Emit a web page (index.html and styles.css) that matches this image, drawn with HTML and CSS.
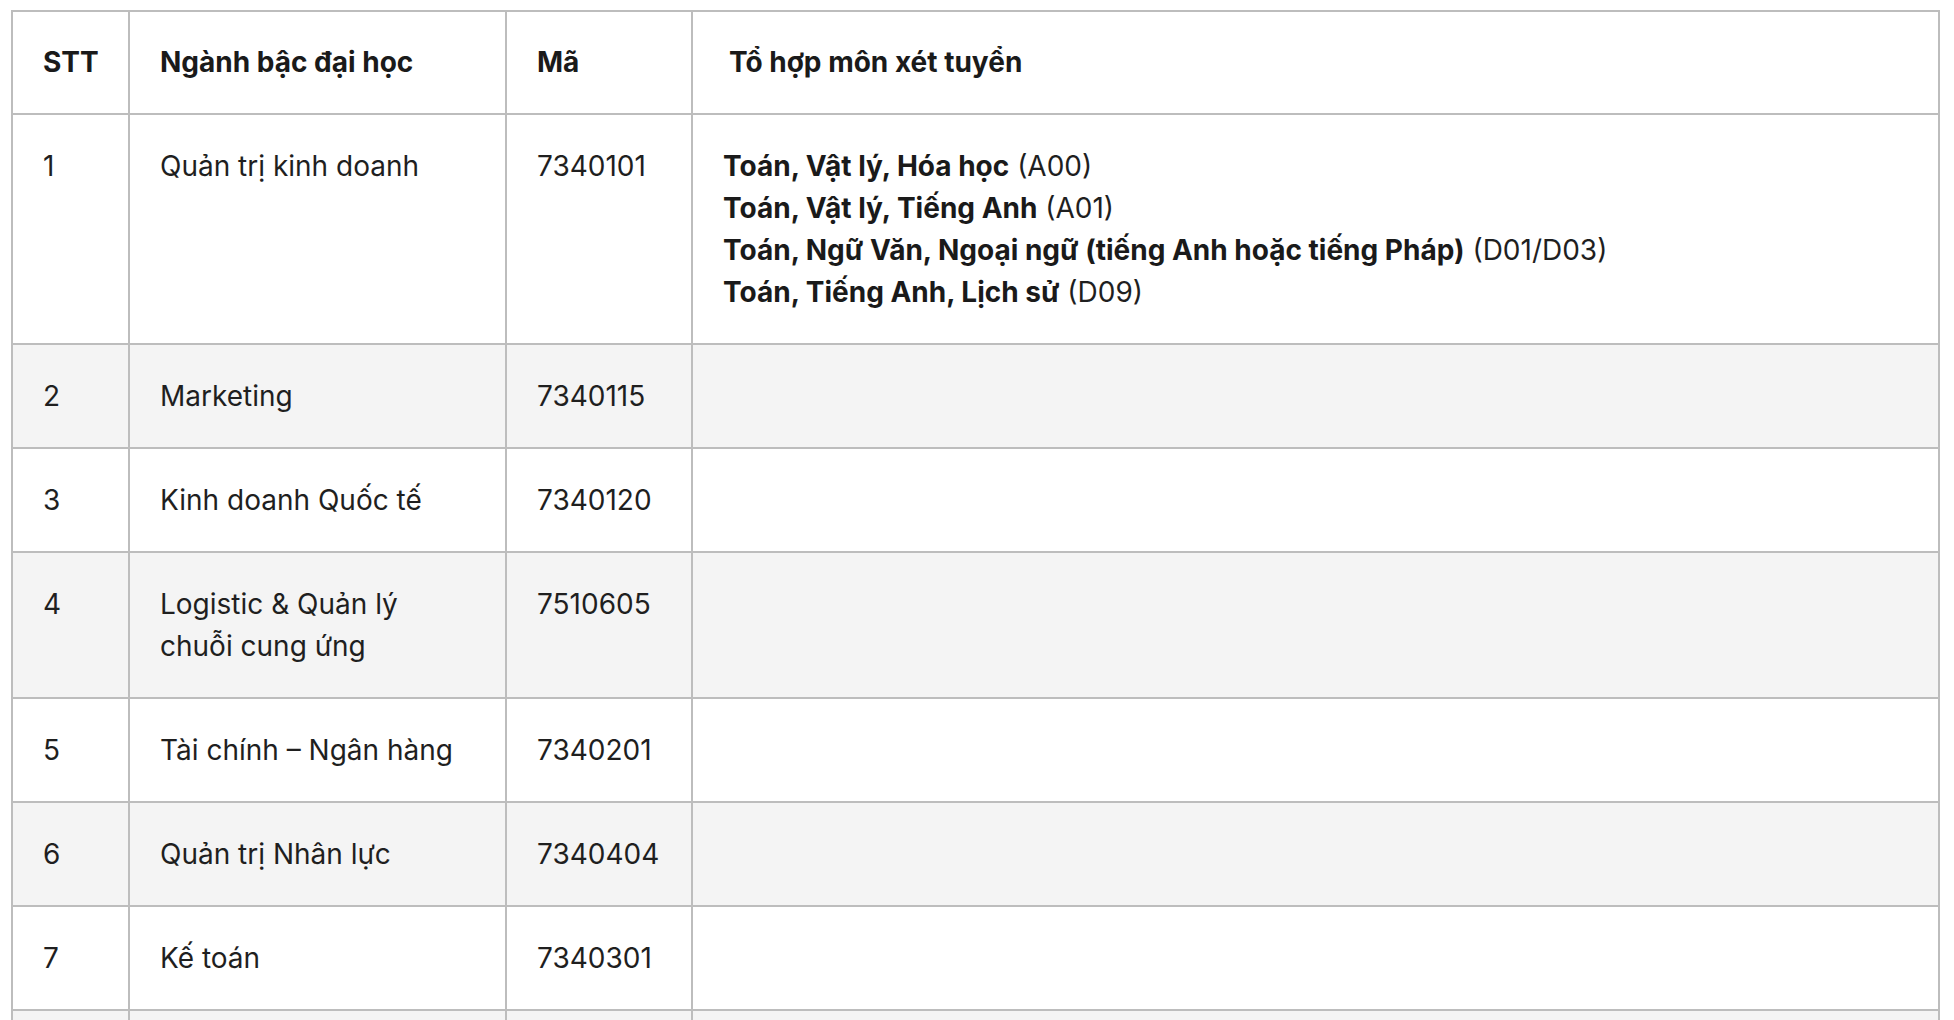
FILE: index.html
```html
<!DOCTYPE html>
<html lang="vi">
<head>
<meta charset="utf-8">
<title>Ngành đào tạo</title>
<link rel="stylesheet" href="styles.css">
</head>
<body>
<table class="majors">
  <colgroup>
    <col class="c-stt">
    <col class="c-name">
    <col class="c-code">
    <col class="c-combo">
  </colgroup>
  <thead>
    <tr>
      <th>STT</th>
      <th>Ngành bậc đại học</th>
      <th>Mã</th>
      <th class="combo-head">Tổ hợp môn xét tuyển</th>
    </tr>
  </thead>
  <tbody>
    <tr>
      <td>1</td>
      <td>Quản trị kinh doanh</td>
      <td>7340101</td>
      <td>
        <div><strong>Toán, Vật lý, Hóa học</strong> (A00)</div>
        <div><strong>Toán, Vật lý, Tiếng Anh</strong> (A01)</div>
        <div><strong>Toán, Ngữ Văn, Ngoại ngữ (tiếng Anh hoặc tiếng Pháp)</strong> (D01/D03)</div>
        <div><strong>Toán, Tiếng Anh, Lịch sử</strong> (D09)</div>
      </td>
    </tr>
    <tr>
      <td>2</td>
      <td>Marketing</td>
      <td>7340115</td>
      <td></td>
    </tr>
    <tr>
      <td>3</td>
      <td>Kinh doanh Quốc tế</td>
      <td>7340120</td>
      <td></td>
    </tr>
    <tr>
      <td>4</td>
      <td>Logistic &amp; Quản lý chuỗi cung ứng</td>
      <td>7510605</td>
      <td></td>
    </tr>
    <tr>
      <td>5</td>
      <td>Tài chính – Ngân hàng</td>
      <td>7340201</td>
      <td></td>
    </tr>
    <tr>
      <td>6</td>
      <td>Quản trị Nhân lực</td>
      <td>7340404</td>
      <td></td>
    </tr>
    <tr>
      <td>7</td>
      <td>Kế toán</td>
      <td>7340301</td>
      <td></td>
    </tr>
    <tr class="row-empty">
      <td></td>
      <td></td>
      <td></td>
      <td></td>
    </tr>
  </tbody>
</table>
</body>
</html>
```
FILE: styles.css
```css
html, body {
  margin: 0;
  padding: 0;
  background: #ffffff;
}

body {
  font-family: Inter, "Noto Sans", "Liberation Sans", sans-serif;
  font-size: 28px;
  line-height: 42px;
  color: #1f1f1f;
  padding: 10px 0 0 11px;
}

.majors {
  border-collapse: collapse;
  table-layout: fixed;
  width: 1927px;
}

.c-stt { width: 117px; }
.c-name { width: 377px; }
.c-code { width: 186px; }
.c-combo { width: 1247px; }

.majors th,
.majors td {
  border: 2px solid #bdbdbd;
  padding: 30px 30px 30px 30px;
  text-align: left;
  vertical-align: top;
}

.majors th {
  padding-top: 29px;
  font-weight: 700;
  color: #1a1a1a;
}

.majors th.combo-head {
  padding-left: 36px;
}

.majors td strong {
  font-weight: 700;
  color: #1a1a1a;
}

.majors tbody tr:nth-child(even) td {
  background: #f4f4f4;
}

.majors .row-empty td {
  height: 42px;
}
```
